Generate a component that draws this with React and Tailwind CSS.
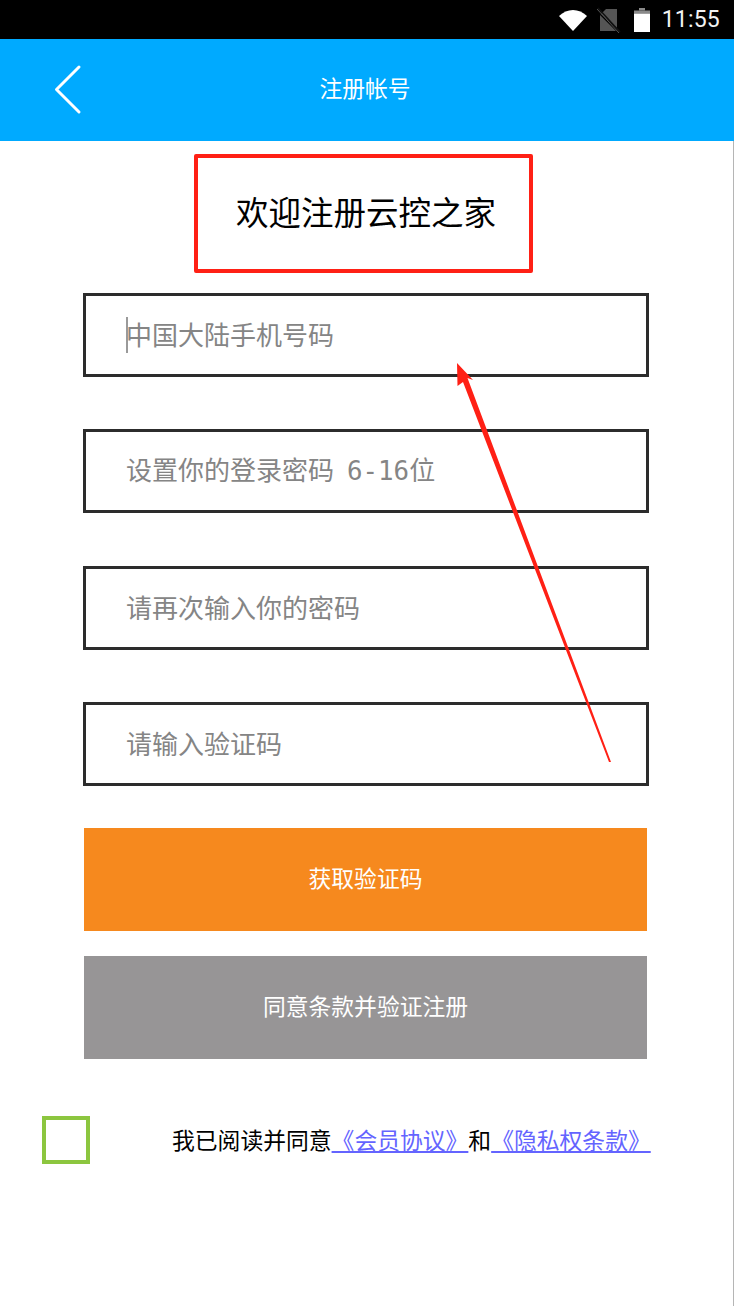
import React from 'react';

const CJK = "font-['Noto_Sans_CJK_SC','Noto_Sans',sans-serif]";

// Status bar icons
function StatusIcons() {
  return (
    <div className="flex items-center">
      <svg width="30" height="24" viewBox="0 0 30 24" className="mr-[9px]">
        <path d="M1 8 C9 0 21 0 29 8 L15 23 Z" fill="#fff" />
      </svg>
      <svg width="24" height="26" viewBox="0 0 24 26" className="mr-[13px]">
        <path d="M4 7 L9 2 H20 V21 Z" fill="#555" />
        <path d="M3 8 V24 H19 Z" fill="#555" />
        <path d="M1 1 L23 25" stroke="#111" strokeWidth="1.5" />
        <path d="M0 2 L22 26" stroke="#555" strokeWidth="1" />
      </svg>
      <svg width="16" height="24" viewBox="0 0 16 24" className="mr-[12px]">
        <path d="M5 0 H11 V2.5 H5 Z" fill="#8a8a8a" />
        <path d="M0 2.5 H16 V5.5 H0 Z" fill="#8a8a8a" />
        <path d="M0 5.5 H16 V24 H0 Z" fill="#fff" />
      </svg>
      <span className="font-['Roboto',sans-serif] text-[23px] leading-none text-[#f2f2f2] tracking-[0.2px]">11:55</span>
    </div>
  );
}

function Field({ text, digits, suffix, caret }) {
  return (
    <div className="relative flex h-[84px] w-[566px] items-center border-[3px] border-[#2c2c2c] bg-white pb-[2px] pl-[40px] text-[26px] leading-none text-[#858585]">
      {caret && <span className="absolute left-[40px] top-[21px] h-[36px] w-[2px] bg-[#9a9a9a]" />}
      <span className="whitespace-pre">
        {text}
        {digits && <span className="ml-[13px] font-['DejaVu_Sans_Mono',monospace] text-[25.8px]">{digits}</span>}
        {suffix}
      </span>
    </div>
  );
}

export default function App() {
  return (
    <div className={`relative h-[1306px] w-[734px] overflow-hidden bg-white ${CJK}`}>
      {/* Barra de status */}
      <div className="flex h-[39px] items-center justify-end bg-black pr-[14px]">
        <StatusIcons />
      </div>

      {/* Cabeçalho */}
      <div className="relative flex h-[102px] items-center justify-center bg-[#00aaff] pb-[4px] pr-[4px]">
        <svg width="30" height="52" viewBox="0 0 30 52" className="absolute left-[53px] top-[25px]">
          <path d="M26 3 L3.5 25.5 L26 48" fill="none" stroke="#fff" strokeWidth="3" strokeLinecap="round" strokeLinejoin="round" />
        </svg>
        <span className="text-[22.8px] leading-none text-white">注册帐号</span>
      </div>

      <div className="flex flex-col items-start">
        {/* Título */}
        <div className="ml-[194px] mt-[13px] flex h-[119px] w-[339px] items-center justify-center rounded-[2px] border-4 border-[#ff2015] pb-[4px] pl-[5px] text-[32.5px] leading-none text-black">
          欢迎注册云控之家
        </div>

        {/* Campos */}
        <div className="ml-[83px] mt-[20px] flex flex-col gap-[52.4px]">
          <Field text="中国大陆手机号码" caret />
          <Field text="设置你的登录密码" digits="6-16" suffix="位" />
          <Field text="请再次输入你的密码" />
          <Field text="请输入验证码" />
        </div>

        {/* Botões */}
        <div className="ml-[84px] mt-[42px] flex w-[563px] flex-col gap-[25px] text-[22.8px] leading-none text-white">
          <div className="flex h-[103px] items-center justify-center bg-[#f6891e] pb-[2px]">获取验证码</div>
          <div className="flex h-[103px] items-center justify-center bg-[#979596] pb-[2px]">同意条款并验证注册</div>
        </div>
      </div>

      {/* Termos */}
      <div className="mt-[57px] flex items-start pl-[42px]">
        <div className="h-[48px] w-[48px] border-4 border-[#8cc63f]" />
        <div className="ml-[82px] mt-[11px] whitespace-pre text-[22.8px] leading-[26px] text-black">
          我已阅读并同意
          <span className="text-[#6464ff] underline">《会员协议》</span>
          和
          <span className="text-[#6464ff] underline">《隐私权条款》</span>
        </div>
      </div>

      {/* Borda direita */}
      <div className="absolute bottom-0 right-0 top-[141px] w-px bg-[#b5b5b5]" />

      {/* Seta de anotação */}
      <svg width="734" height="1306" viewBox="0 0 734 1306" className="pointer-events-none absolute left-0 top-0">
        <polygon points="457,363 473,380 467.5,378 611,762 609,762 463,382 457.5,386" fill="#ff2015" />
      </svg>
    </div>
  );
}
